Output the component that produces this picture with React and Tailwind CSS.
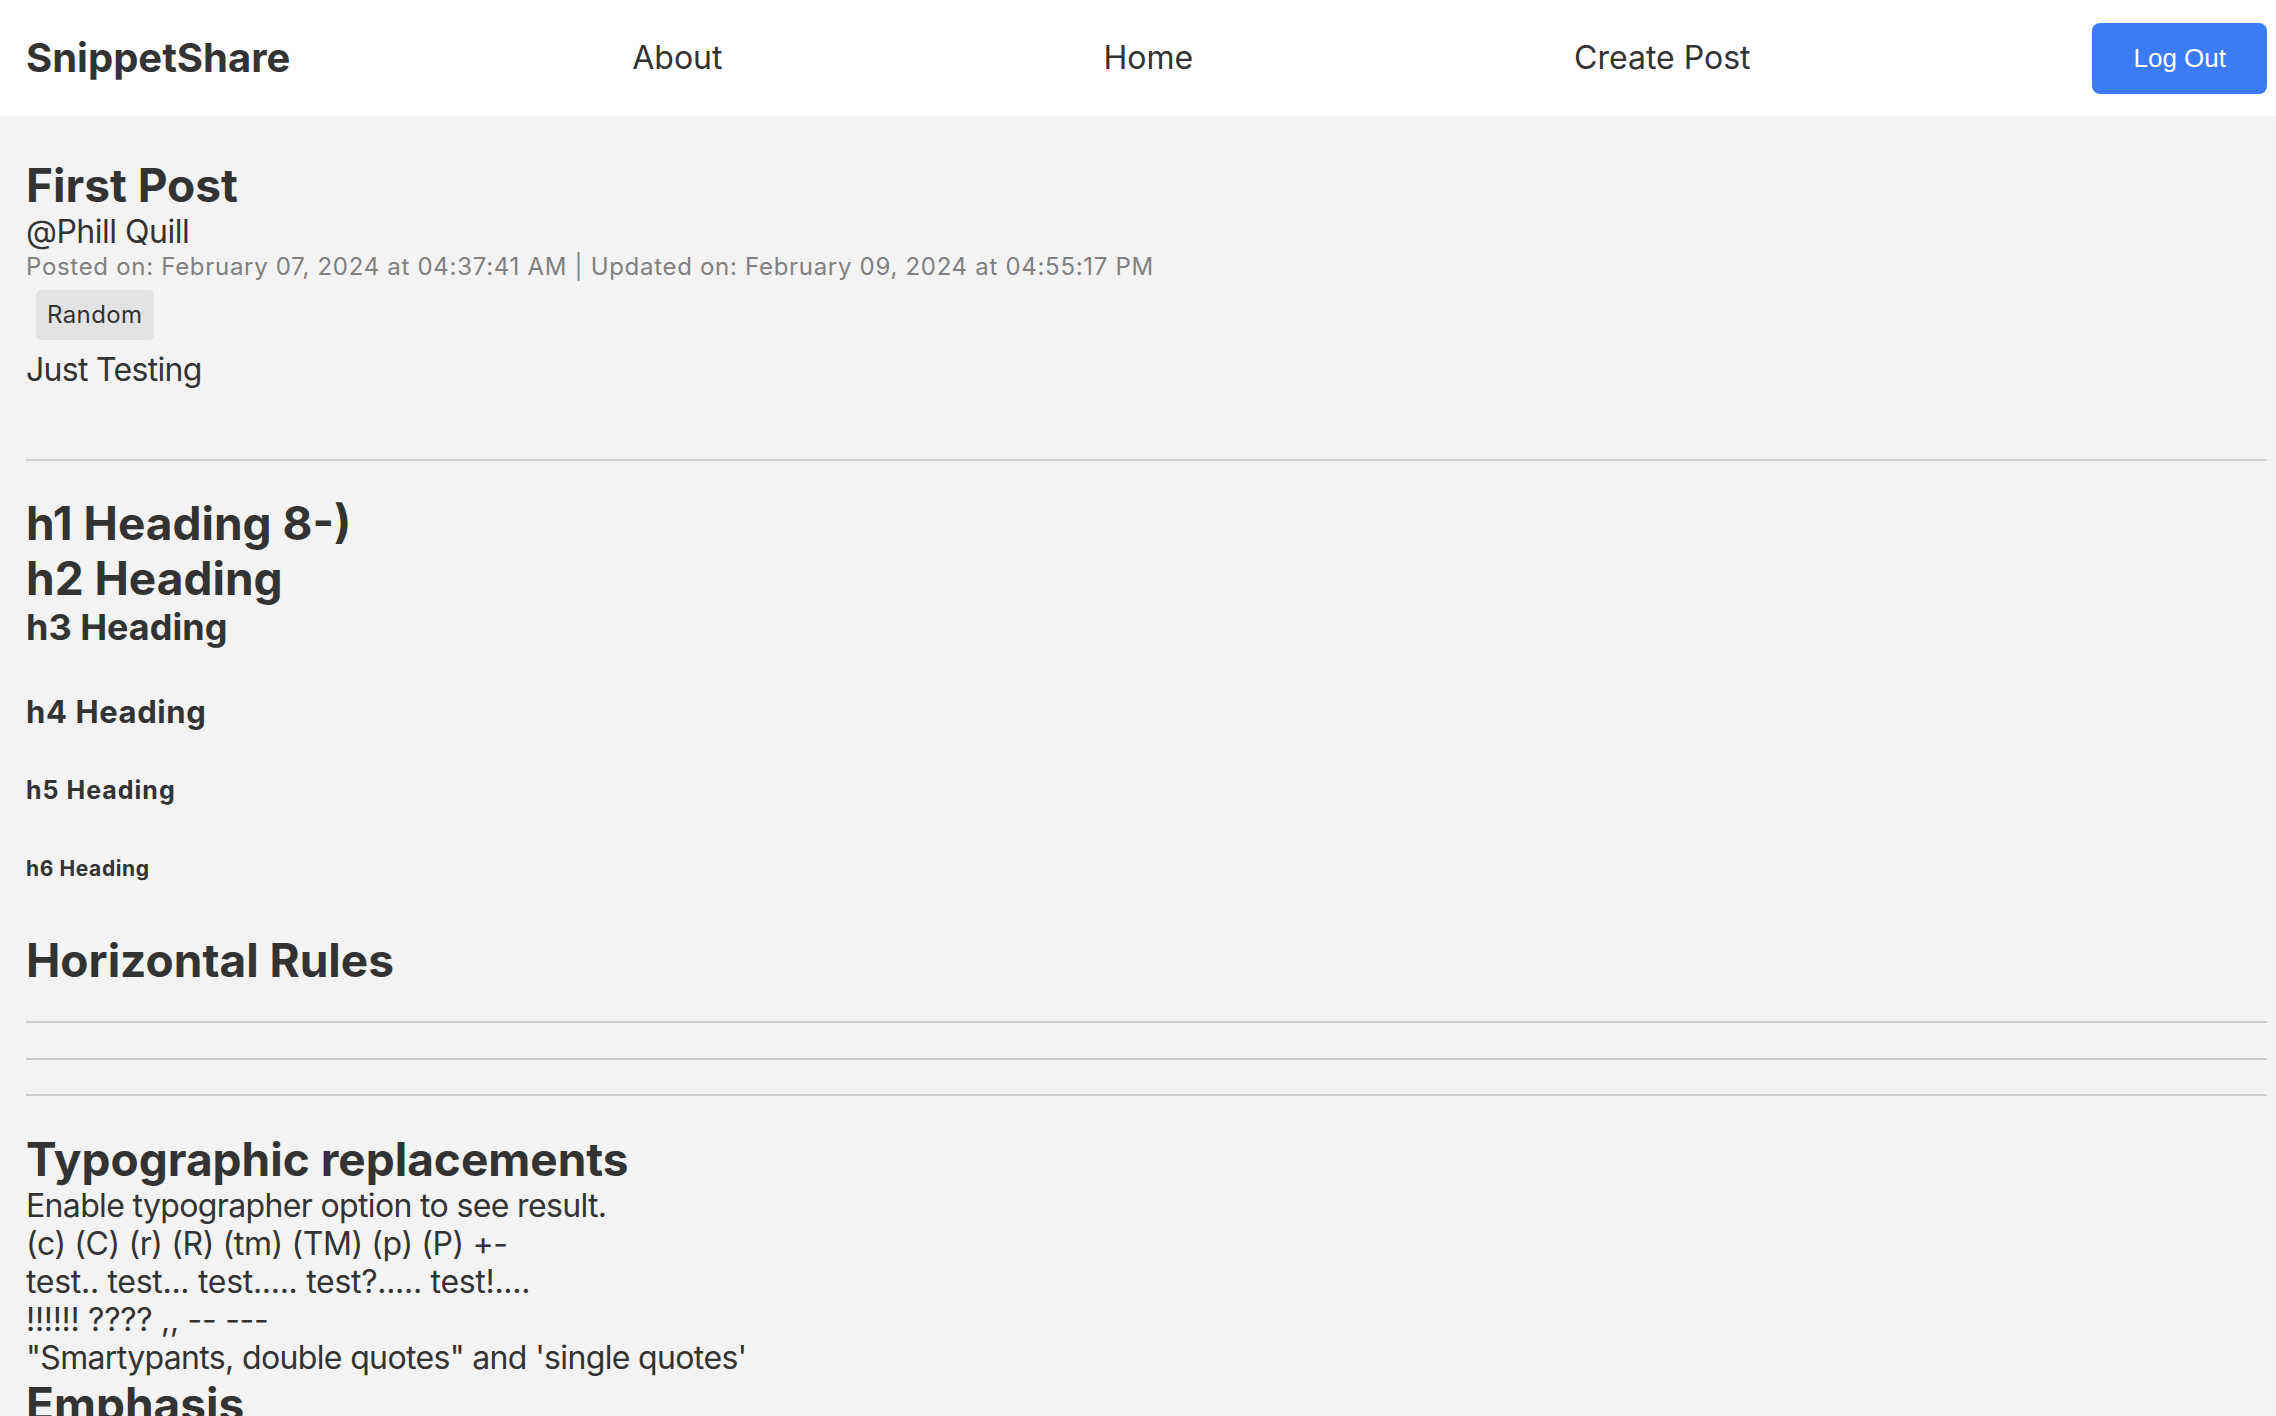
// Post detail page: top nav plus rendered markdown body
const navLinks = ['About', 'Home', 'Create Post'];

const typoLines = [
  { text: 'Enable typographer option to see result.', cls: 'tracking-[-0.65px]' },
  { text: '(c) (C) (r) (R) (tm) (TM) (p) (P) +-', cls: 'tracking-[-0.4px]' },
  { text: 'test.. test... test..... test?..... test!....', cls: 'tracking-[-0.3px]' },
  { text: '!!!!!! ???? ,, -- ---', cls: 'tracking-[-0.3px]' },
  { text: '"Smartypants, double quotes" and \'single quotes\'', cls: 'tracking-[-0.65px]' },
];

function Rule({ className = '' }) {
  return <hr className={`border-0 border-t-2 border-[#cccccc] ${className}`} />;
}

export default function App() {
  return (
    <div className="min-h-screen bg-[#f3f3f3] text-[#333333] font-['Inter','Noto_Sans',sans-serif]">
      {/* Top navigation */}
      <header className="h-[116px] bg-white flex items-center justify-between pl-[26px] pr-[9px]">
        <a className="text-[40px] font-bold">SnippetShare</a>
        {navLinks.map((label) => (
          <a key={label} className="px-[39px] text-[32px]">
            {label}
          </a>
        ))}
        <button className="h-[71px] px-[41px] rounded-[8px] bg-[#3b7cf6] text-white text-[26px] font-['Liberation_Sans',Arial,sans-serif]">
          Log Out
        </button>
      </header>

      <main className="pt-[42px] pl-[26px] pr-[9px] overflow-hidden">
        {/* Post header */}
        <h1 className="text-[46px] leading-[55px] font-bold">First Post</h1>
        <p className="text-[32px] leading-[38px] tracking-[-0.5px]">@Phill Quill</p>
        <p className="mt-[2px] text-[24px] leading-[28px] tracking-[0.7px] text-[#808080]">
          Posted on: February 07, 2024 at 04:37:41 AM | Updated on: February 09, 2024 at 04:55:17 PM
        </p>
        <div className="mt-[9px] ml-[10px] flex">
          <span className="h-[50px] px-[11px] rounded-[5px] bg-[#e3e3e3] text-[24px] leading-[50px] tracking-[0.4px]">
            Random
          </span>
        </div>
        <p className="mt-[11px] text-[32px] leading-[38px] tracking-[-0.7px]">Just Testing</p>

        <Rule className="mt-[70px]" />

        {/* Markdown body */}
        <h1 className="mt-[35px] text-[46px] leading-[55px] font-bold">h1 Heading 8-)</h1>
        <h2 className="text-[46px] leading-[55px] font-bold">h2 Heading</h2>
        <h3 className="text-[36px] leading-[43px] font-bold">h3 Heading</h3>
        <h4 className="mt-[45px] text-[31px] leading-[36px] font-bold tracking-[0.6px]">h4 Heading</h4>
        <h5 className="mt-[46px] text-[25px] leading-[29px] font-bold tracking-[1px]">h5 Heading</h5>
        <h6 className="mt-[52px] text-[21px] leading-[24px] font-bold tracking-[0.6px]">h6 Heading</h6>

        <h2 className="mt-[52px] text-[46px] leading-[55px] font-bold">Horizontal Rules</h2>
        <Rule className="mt-[33px]" />
        <Rule className="mt-[35px]" />
        <Rule className="mt-[34px]" />

        <h2 className="mt-[36px] text-[46px] leading-[55px] font-bold">Typographic replacements</h2>
        <div className="text-[32px] leading-[38px]">
          {typoLines.map((line) => (
            <p key={line.text} className={line.cls}>
              {line.text}
            </p>
          ))}
        </div>
        <h2 className="text-[46px] leading-[55px] font-bold">Emphasis</h2>
      </main>
    </div>
  );
}
